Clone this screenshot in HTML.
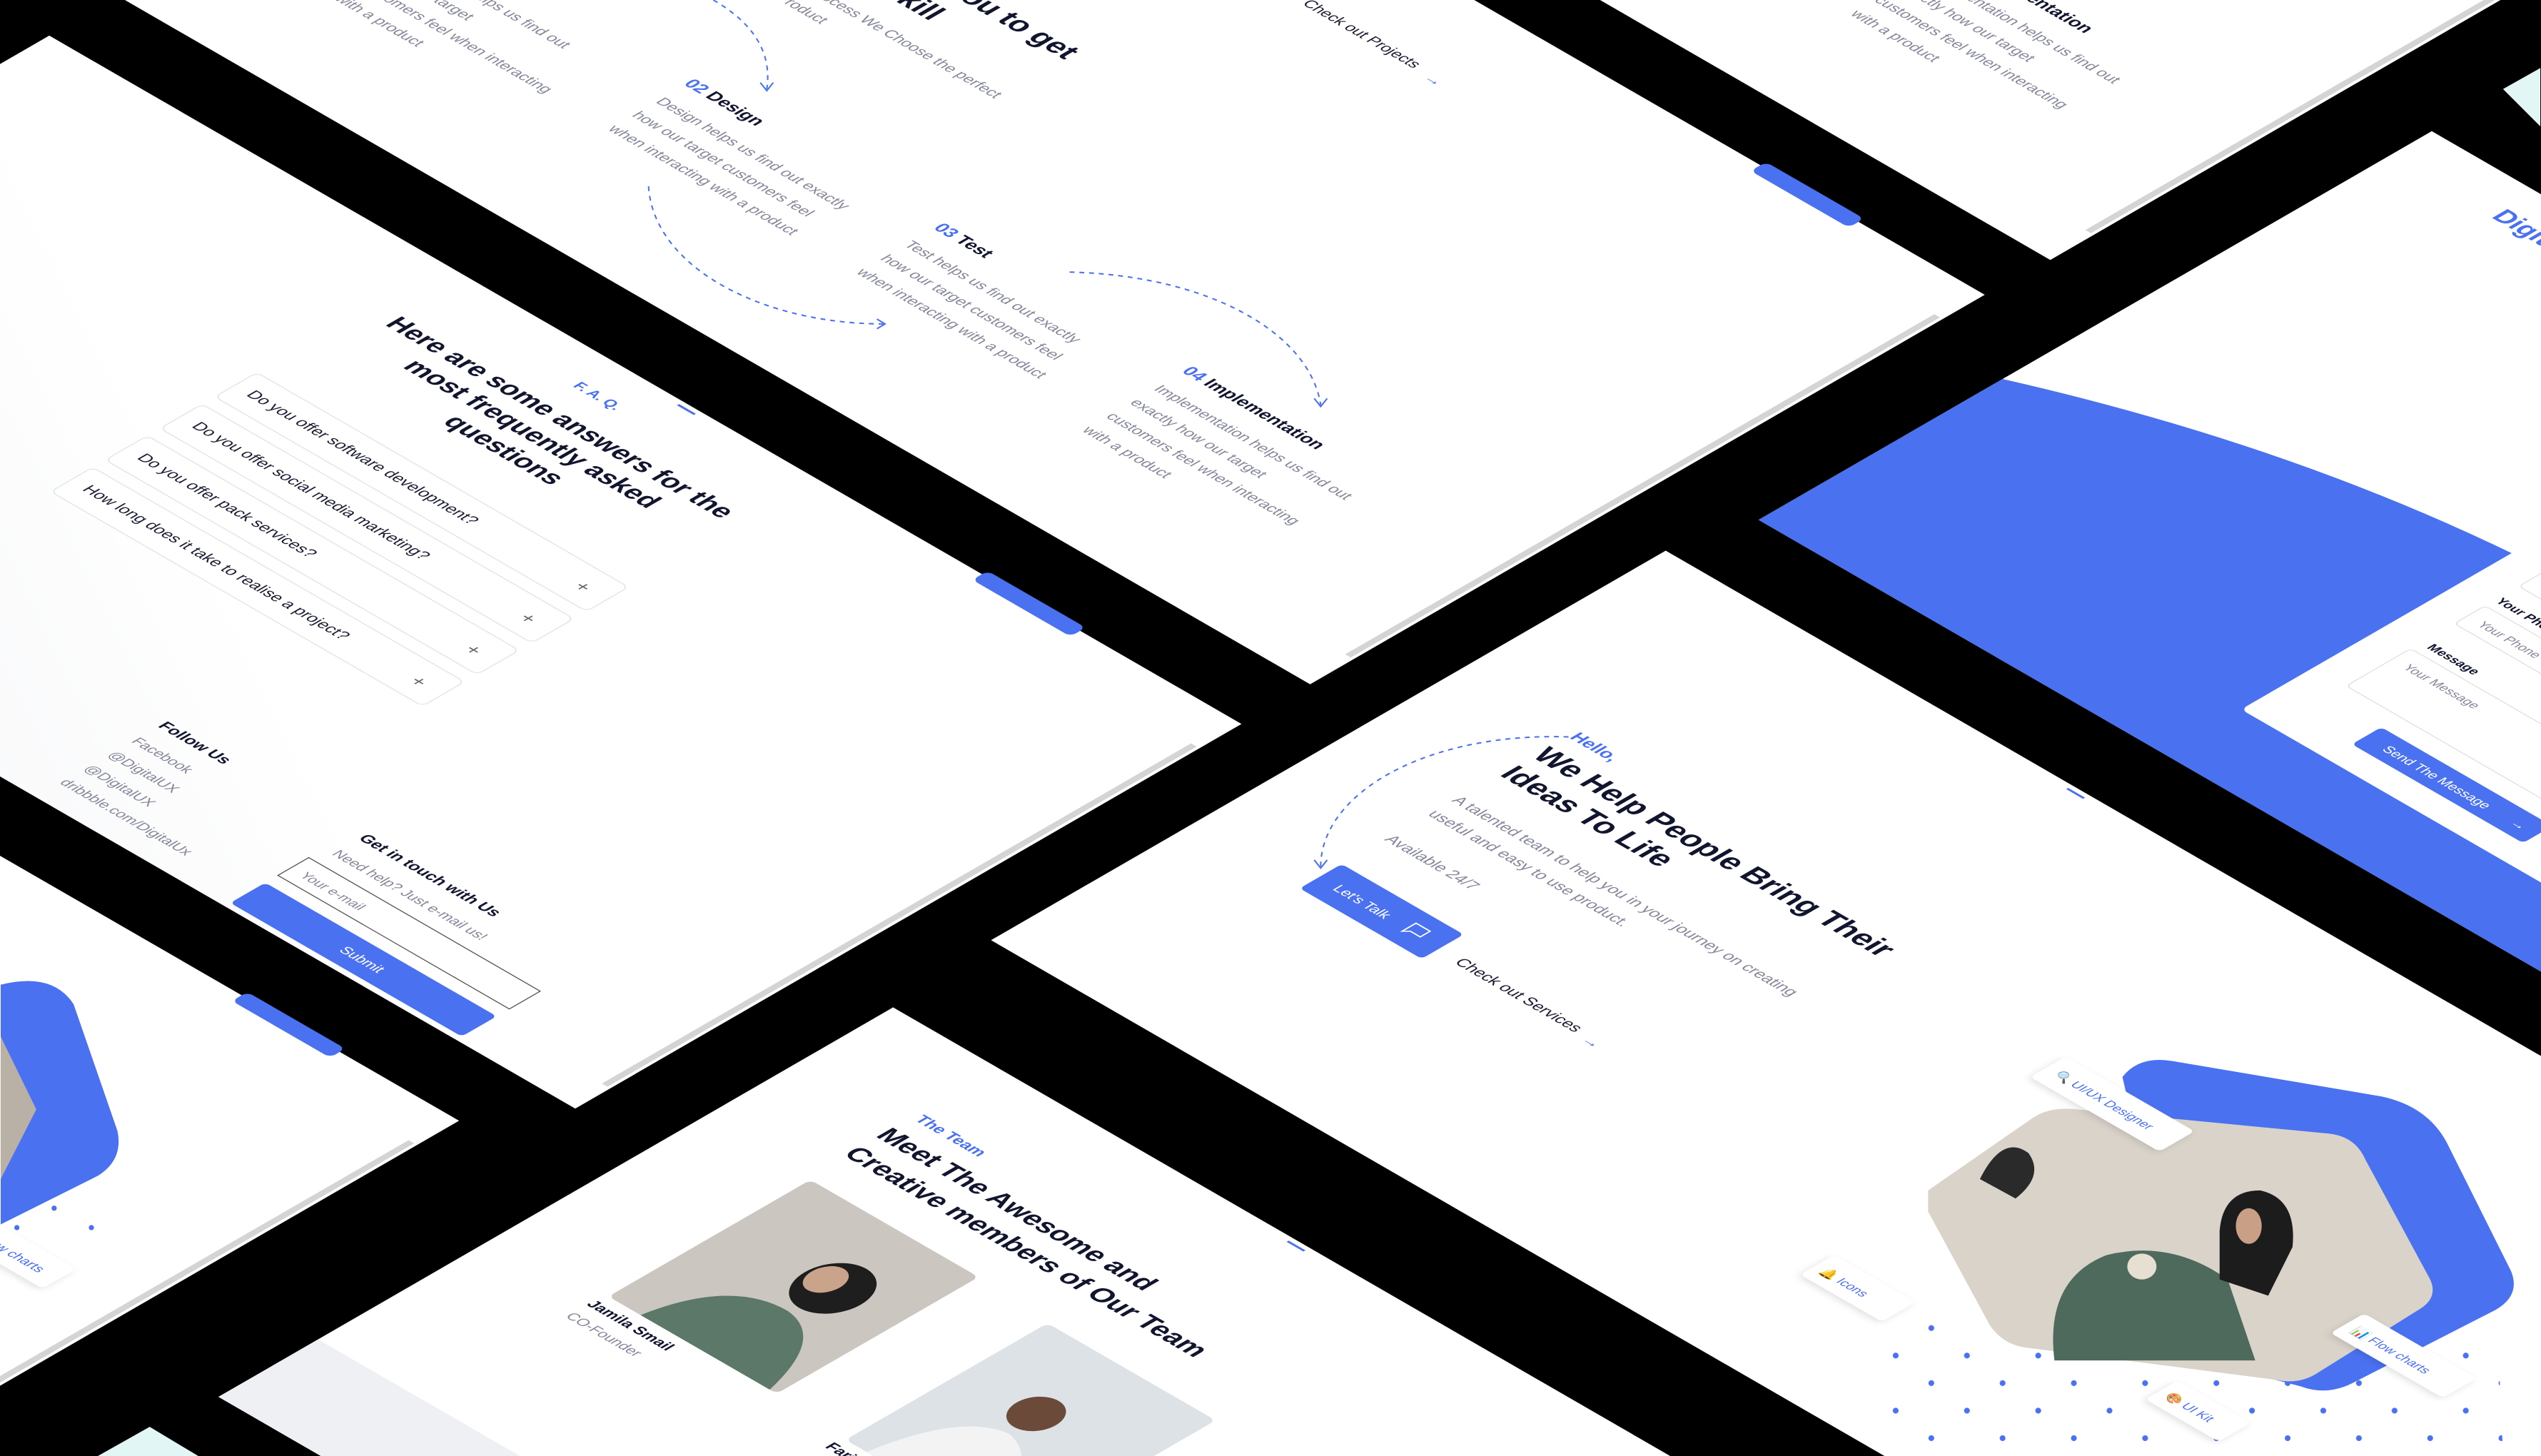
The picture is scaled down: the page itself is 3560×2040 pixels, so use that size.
<!DOCTYPE html>
<html><head><meta charset="utf-8"><style>
html,body{margin:0;padding:0;background:#000;width:3560px;height:2040px;overflow:hidden;position:relative}
svg{display:block;position:absolute;left:0;top:0}
text{font-family:"Liberation Sans",sans-serif}
.h{font-weight:bold;fill:#12152e}
.g{fill:#85889a}
.b{fill:#4a71f0}
.d{fill:#1a1d30}
</style></head><body>
<svg width="3560" height="2040" viewBox="0 0 1568 899" xmlns="http://www.w3.org/2000/svg">
<defs>
<linearGradient id="gf" x1="1" y1="0" x2="0" y2="1"><stop offset="0" stop-color="#fff"/><stop offset="0.55" stop-color="#fff"/><stop offset="1" stop-color="#f1f2f5"/></linearGradient>
<pattern id="dots" width="44" height="34" patternUnits="userSpaceOnUse"><circle cx="4" cy="4" r="1.8" fill="#4a71f0"/><circle cx="26" cy="21" r="1.8" fill="#4a71f0"/></pattern>
<filter id="sh" x="-30%" y="-30%" width="160%" height="160%"><feDropShadow dx="0" dy="2" stdDeviation="2.5" flood-color="#000" flood-opacity="0.12"/></filter>
</defs>
<rect width="1568" height="899" fill="#000"/>

<polygon points="1545,55 1568,42 1568,78" fill="#e3f6f6"/>
<polygon points="60,899 92,881 122,899" fill="#e3f6f6"/>

<!-- Process panel -->
<g transform="matrix(0.866 0.5 -0.866 0.5 359 -318)">
<rect x="0" y="0" width="1000" height="481" fill="#fff"/>
<rect x="994" y="30" width="4" height="420" fill="#d4d4d4"/>
<rect x="840" y="-4" width="70" height="11" rx="4" class="b"/>
<text x="527" y="183" text-anchor="end" class="h" font-size="18">How we help you to get</text>
<text x="455" y="207" text-anchor="end" class="h" font-size="18">Skill</text>
<text x="526" y="232" text-anchor="end" class="g" font-size="9.5">Here is the process We Choose the perfect</text>
<text x="418" y="248" text-anchor="end" class="g" font-size="9.5">strategy for Your Product</text>
<text x="577" y="64" class="d" font-size="9.5">Check out Projects</text>
<text x="666" y="67" class="b" font-size="10">→</text>
<g font-size="9.5">
<text x="229" y="334" font-size="11" class="h"><tspan class="b">01</tspan> Research</text>
<text x="229" y="355" class="g">Research helps us find out</text>
<text x="229" y="372" class="g">how our target</text>
<text x="229" y="389" class="g">customers feel when interacting</text>
<text x="229" y="406" class="g">with a product</text>
<text x="406" y="334" font-size="11" class="h"><tspan class="b">02</tspan> Design</text>
<text x="407" y="355" class="g">Design helps us find out exactly</text>
<text x="407" y="372" class="g">how our target customers feel</text>
<text x="407" y="389" class="g">when interacting with a product</text>
<text x="584" y="334" font-size="11" class="h"><tspan class="b">03</tspan> Test</text>
<text x="584" y="355" class="g">Test helps us find out exactly</text>
<text x="584" y="372" class="g">how our target customers feel</text>
<text x="584" y="389" class="g">when interacting with a product</text>
<text x="761" y="334" font-size="11" class="h"><tspan class="b">04</tspan> Implementation</text>
<text x="762" y="355" class="g">Implementation helps us find out</text>
<text x="762" y="372" class="g">exactly how our target</text>
<text x="762" y="389" class="g">customers feel when interacting</text>
<text x="762" y="406" class="g">with a product</text>
</g>
</g>

<!-- Top right panel -->
<g transform="matrix(0.866 0.5 -0.866 0.5 816 -580)">
<rect x="0" y="0" width="1000" height="481" fill="#fff"/>
<rect x="994" y="30" width="4" height="420" fill="#d4d4d4"/>
<g font-size="9.5">
<text x="776" y="329" font-size="11" class="h"><tspan class="b">04</tspan> Implementation</text>
<text x="777" y="350" class="g">Implementation helps us find out</text>
<text x="777" y="367" class="g">exactly how our target</text>
<text x="777" y="384" class="g">customers feel when interacting</text>
<text x="777" y="401" class="g">with a product</text>
</g>
</g>

<!-- FAQ panel -->
<g transform="matrix(0.866 0.5 -0.866 0.5 30 22)">
<rect x="0" y="0" width="850" height="475" fill="url(#gf)"/>
<rect x="844" y="30" width="4" height="420" fill="#d4d4d4"/>
<rect x="665" y="-4" width="70" height="11" rx="4" class="b"/>
<rect x="452" y="3" width="12" height="1.5" class="b"/>
<text x="418" y="30" text-anchor="middle" class="b" font-size="9" font-weight="bold">F. A. Q.</text>
<text x="418" y="59" text-anchor="middle" class="h" font-size="16.5">Here are some answers for the</text>
<text x="418" y="79" text-anchor="middle" class="h" font-size="16.5">most frequently asked</text>
<text x="418" y="99" text-anchor="middle" class="h" font-size="16.5">questions</text>
<g font-size="10" fill="#1a1d30">
<rect x="282" y="134" width="265" height="30" rx="4" fill="#fff" stroke="#e6e7ec" stroke-width="0.8"/>
<text x="292" y="152">Do you offer software development?</text><text x="527" y="154" fill="#666" font-size="12">+</text>
<rect x="282" y="173" width="265" height="30" rx="4" fill="#fff" stroke="#e6e7ec" stroke-width="0.8"/>
<text x="292" y="191">Do you offer social media marketing?</text><text x="527" y="193" fill="#666" font-size="12">+</text>
<rect x="282" y="212" width="265" height="30" rx="4" fill="#fff" stroke="#e6e7ec" stroke-width="0.8"/>
<text x="292" y="230">Do you offer pack services?</text><text x="527" y="232" fill="#666" font-size="12">+</text>
<rect x="282" y="251" width="265" height="30" rx="4" fill="#fff" stroke="#e6e7ec" stroke-width="0.8"/>
<text x="292" y="269">How long does it take to realise a project?</text><text x="527" y="271" fill="#666" font-size="12">+</text>
</g>
<text x="465" y="388" class="h" font-size="10">Follow Us</text>
<g class="g" font-size="9">
<text x="465" y="407">Facebook</text>
<text x="465" y="424">@DigitalUX</text>
<text x="465" y="441">@DigitalUX</text>
<text x="465" y="458">dribbble.com/DigitalUx</text>
</g>
<text x="606" y="386" class="h" font-size="10">Get in touch with Us</text>
<text x="606" y="405" class="g" font-size="9">Need help? Just e-mail us!</text>
<rect x="600" y="415" width="165" height="22" fill="#fff" stroke="#444" stroke-width="0.6"/>
<text x="608" y="430" class="g" font-size="8.5">Your e-mail</text>
<rect x="600" y="446" width="165" height="25" rx="3" class="b"/>
<text x="682" y="462" text-anchor="middle" fill="#fff" font-size="9">Submit</text>
</g>

<!-- Left bottom panel -->
<g transform="matrix(0.866 0.5 -0.866 0.5 -583 192)">
<rect x="0" y="0" width="1000" height="481" fill="#fff"/>
<rect x="994" y="30" width="4" height="420" fill="#d4d4d4"/>
<rect x="845" y="-4" width="70" height="11" rx="4" class="b"/>
<rect x="880" y="228" width="75" height="24" rx="3" fill="#fff" filter="url(#sh)"/>
<text x="944" y="244" text-anchor="end" class="b" font-size="8.5">Flow charts</text>
</g>
<path d="M0,608 Q32,600 45,620 L72,698 Q76,716 60,726 L0,756 Z" fill="#4a71f0"/>
<path d="M0,640 L22,685 L0,728 Z" fill="#b9b1a6"/>
<circle cx="33" cy="746" r="1.6" fill="#4a71f0"/><circle cx="56" cy="758" r="1.6" fill="#4a71f0"/><circle cx="10" cy="758" r="1.6" fill="#4a71f0"/>

<!-- Contact panel -->
<g transform="matrix(0.866 0.5 -0.866 0.5 1501 81)">
<rect x="0" y="0" width="1000" height="480" fill="#fff"/>
<text x="74" y="32" class="b" font-size="16" font-weight="bold">Digital UX</text>
<path d="M0,306 Q140,245 290,232 Q500,215 800,160 L800,480 L0,480 Z" fill="#4a71f0"/>
<rect x="289" y="120" width="400" height="305" rx="4" fill="#fff"/>
<text x="313" y="222" class="h" font-size="8">Your Name</text>
<rect x="312" y="228" width="160" height="22" rx="3" fill="#fff" stroke="#ddd" stroke-width="0.6"/>
<text x="313" y="268" class="h" font-size="8">Your Phone</text>
<rect x="312" y="274" width="160" height="22" rx="3" fill="#fff" stroke="#ddd" stroke-width="0.6"/>
<text x="321" y="289" class="g" font-size="8">Your Phone</text>
<text x="317" y="321" class="h" font-size="8">Message</text>
<rect x="312" y="327" width="260" height="46" rx="3" fill="#fff" stroke="#ddd" stroke-width="0.6"/>
<text x="321" y="342" class="g" font-size="8">Your Message</text>
<rect x="350" y="386" width="122" height="21" rx="3" class="b"/>
<text x="364" y="400" fill="#fff" font-size="8.5">Send The Message</text>
<text x="455" y="400" fill="#fff" font-size="8.5">→</text>
</g>

<!-- Hero panel -->
<g transform="matrix(0.866 0.5 -0.866 0.5 1028 340)">
<rect x="0" y="0" width="1000" height="481" fill="#fff"/>
<rect x="290" y="3" width="12" height="1.5" class="b"/>
<text x="81" y="150" class="b" font-size="11" font-weight="bold">Hello,</text>
<text x="79" y="175" class="h" font-size="19">We Help People Bring Their</text>
<text x="79" y="198" class="h" font-size="19">Ideas To Life</text>
<text x="78" y="231" class="g" font-size="10">A talented team to help you in your journey on creating</text>
<text x="78" y="248" class="g" font-size="10">useful and easy to use product.</text>
<text x="78" y="279" class="g" font-size="10">Available 24/7</text>
<rect x="78" y="309" width="87" height="30" rx="3" class="b"/>
<text x="90" y="328" fill="#fff" font-size="9">Let's Talk</text>
<path d="M141,319 h10 v7 h-7 l-3,3 z" fill="none" stroke="#fff" stroke-width="0.9"/>
<text x="179" y="330" class="d" font-size="10">Check out Services</text>
<text x="272" y="333" class="b" font-size="10">→</text>
</g>
<path d="M1150,825 L1330,795 L1540,785 L1545,899 L1150,899 Z" fill="url(#dots)"/>
<path d="M1310,665 Q1320,652 1340,655 L1470,677 Q1498,683 1510,705 L1550,785 Q1556,800 1540,809 L1452,854 Q1436,862 1420,856 L1350,838 Z" fill="#4a71f0"/>
<path d="M1190,735 L1255,690 Q1266,683 1282,685 L1438,700 Q1454,702 1460,716 L1500,790 Q1505,801 1494,808 L1430,848 Q1419,855 1405,852 L1250,832 Q1236,830 1228,818 L1190,748 Z" fill="#d9d3ca"/>
<path d="M1222,728 Q1236,700 1252,712 Q1262,726 1244,740 Z" fill="#2a2a2a"/>
<path d="M1268,840 Q1262,790 1300,775 Q1340,765 1375,790 L1392,840 Z" fill="#4e6a5d"/>
<path d="M1370,760 Q1372,735 1395,735 Q1418,740 1415,770 L1400,800 L1370,790 Z" fill="#1c1c1c"/>
<ellipse cx="1388" cy="757" rx="8" ry="11" fill="#c99f86"/>
<ellipse cx="1322" cy="782" rx="9" ry="8" fill="#e8dfd3"/>
<g transform="matrix(0.866 0.5 -0.866 0.5 1028 340)">
<rect x="455" y="170" width="92" height="25" rx="3" fill="#fff" filter="url(#sh)"/>
<text x="462" y="186" font-size="8">🔍</text><text x="474" y="186" class="b" font-size="8">UI/UX Designer</text>
<rect x="495" y="375" width="58" height="24" rx="3" fill="#fff" filter="url(#sh)"/>
<text x="500" y="391" font-size="8">🔔</text><text x="512" y="391" class="b" font-size="8">Icons</text>
<rect x="720" y="222" width="80" height="24" rx="3" fill="#fff" filter="url(#sh)"/>
<text x="726" y="238" font-size="8">📊</text><text x="738" y="238" class="b" font-size="8">Flow charts</text>
<rect x="695" y="330" width="52" height="23" rx="3" fill="#fff" filter="url(#sh)"/>
<text x="700" y="345" font-size="8">🎨</text><text x="712" y="345" class="b" font-size="8">UI Kit</text>
</g>

<!-- Team panel -->
<g transform="matrix(0.866 0.5 -0.866 0.5 551 622)">
<rect x="0" y="0" width="1000" height="481" fill="#fff"/>
<rect x="0" y="410" width="230" height="71" fill="#eef0f3"/>
<rect x="285" y="3" width="12" height="1.5" class="b"/>
<text x="77" y="62" class="b" font-size="10" font-weight="bold">The Team</text>
<text x="73" y="86" class="h" font-size="17">Meet The Awesome and</text>
<text x="73" y="109" class="h" font-size="17">Creative members of Our Team</text>
<rect x="77" y="136" width="120" height="144" rx="4" fill="#cbc6c0"/>
<ellipse cx="152" cy="195" rx="20" ry="24" fill="#1e1e1e"/>
<ellipse cx="144" cy="192" rx="10" ry="13" fill="#c9a38a"/>
<path d="M100,280 Q110,225 150,225 Q180,228 192,280 Z" fill="#5b7868"/>
<text x="74" y="293" class="h" font-size="9.5">Jamila Smail</text>
<text x="74" y="308" class="g" font-size="9">CO-Founder</text>
<rect x="250" y="140" width="120" height="144" rx="4" fill="#dde2e6"/>
<ellipse cx="302" cy="200" rx="14" ry="16" fill="#6b4a3a"/>
<path d="M265,284 Q275,225 305,222 Q335,228 348,284 Z" fill="#f3f3f3"/>
<text x="247" y="296" class="h" font-size="9.5">Farid</text>
</g>

<g fill="none" stroke="#4a71f0" stroke-width="0.9" stroke-dasharray="3,3">
<path d="M440,0 Q478,22 473,55"/>
<path d="M400,115 C403,165 470,200 545,200"/>
<path d="M660,168 C745,170 808,205 815,250"/>
<path d="M968,455 C880,452 815,490 815,535"/>
</g>
<g fill="none" stroke="#4a71f0" stroke-width="0.9">
<path d="M469,51 L473,56 L477,51"/>
<path d="M541,197 L546,200 L541,203"/>
<path d="M811,246 L815,251 L819,246"/>
<path d="M811,531 L815,536 L819,531"/>
</g>
</svg>
</body></html>
